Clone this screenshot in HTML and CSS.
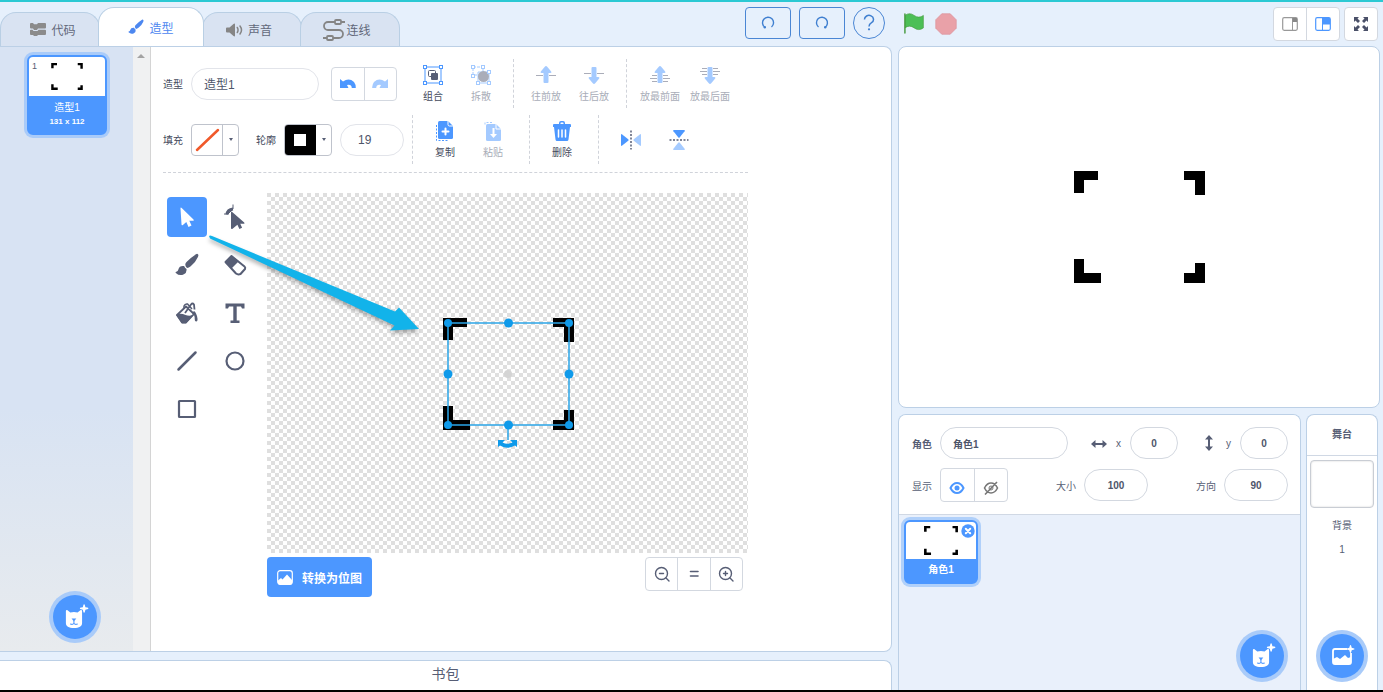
FILE: index.html
```html
<!DOCTYPE html>
<html lang="zh-CN">
<head>
<meta charset="utf-8">
<title>造型编辑器</title>
<link rel="stylesheet" href="styles.css">
</head>
<body>
<svg class="defs" aria-hidden="true">
  <defs>
    <symbol id="brackets" viewBox="0 0 131 112">
      <path d="M0 0h24v9H10v13H0zM110 0h21v24h-10V9h-11zM0 88h10v14h17v10H0zM121 92h10v20h-21v-10h11z"/>
    </symbol>
    <symbol id="cat" viewBox="0 0 28 28">
      <path fill="#fff" d="M5.500 8.300C5.500 7.400 6.400 7.200 7 7.700L9.600 9.800Q13 9 16.400 9.800L19 7.700C19.700 7.100 20.600 7.400 20.600 8.300V19.500C20.600 22.500 18 24.200 13 24.200S5.500 22.500 5.500 19.500Z"/>
      <path fill="#4c97ff" d="M10.800 15.500h4.400L13 18.200z"/>
      <path fill="none" stroke="#4c97ff" stroke-width="1" stroke-linecap="round" d="M13 17.500v2.300M9.800 20.600q2.200.8 3.200-.8 1 1.600 3.200.8"/>
      <path fill="#fff" d="M22.500 2q.5 0 .8 1.200l.4 1.600 1.600.4q1.200.3 1.200.8t-1.200.8l-1.600.4-.4 1.600q-.3 1.200-.8 1.200t-.8-1.200l-.4-1.600-1.600-.4q-1.200-.3-1.200-.8t1.200-.8l1.600-.4.4-1.600q.3-1.200.8-1.200z"/>
    </symbol>
    <symbol id="brush" viewBox="0 0 20 20">
      <path fill="currentColor" d="M18.800.8q1.200.6.300 2.600-1.600 4-6 7.600-1.600 1.400-3 1.400-1.300-1-1.500-2.500-.2-1.200 1-2.400Q14 3.200 17.500 1q.8-.5 1.300-.2zM7.600 10.900q.6 1.600 2 2.400.4 3-2.200 4.400Q3.800 19.600.7 16.600q-.7-.9.400-1 1.400-.2 1.700-1.900.8-3.300 4.800-2.800z"/>
    </symbol>
  </defs>
</svg>
<div class="app">
  <section class="editor">
    <header class="editor-head">
      <nav class="tabs">
        <button class="tab">
          <svg width="16" height="13" viewBox="0 0 16 13"><path fill="#8b8b8b" d="M0 1q0-1 1-1h2l1 1.300h3L8 0h7q1 0 1 1v3.500q0 1-1 1H8L7 7H4L3 5.500H1q-1 0-1-1zM0 7.500q0-.8 1-.8h1.500L3.500 8h4l1-1.300H15q1 0 1 1V11q0 1-1 1H8l-1 1H4l-1-1H1q-1 0-1-1z"/></svg>
          代码</button>
        <button class="tab tab-on">
          <svg width="16" height="16" viewBox="0 0 20 20"><use href="#brush"/></svg>
          造型</button>
        <button class="tab tab-sound">
          <svg width="17" height="14" viewBox="0 0 17 14"><path fill="#858585" d="M1 4.500h2.500L7.500 1q1.500-1 1.500.5v11q0 1.500-1.500.5l-4-3.500H1q-1 0-1-1v-3q0-1 1-1z"/><path fill="none" stroke="#858585" stroke-width="1.500" stroke-linecap="round" d="M11.300 4.500q1.500 2.500 0 5M14 3q3 4 0 8"/></svg>
          声音</button>
        <button class="tab tab-wire">
          <svg width="24" height="22" viewBox="0 0 24 22"><g fill="none" stroke="#858585" stroke-width="1.800"><path d="M13 3H6a4 4 0 0 0 0 8h11a4 4 0 0 1 0 8h-6M19 3h4M5 19H1"/><rect x="13" y="1" width="6" height="4" rx="1"/><rect x="5" y="17" width="6" height="4" rx="1"/></g></svg>
          连线</button>
      </nav>
      <div class="head-actions">
        <button class="outline-btn" aria-label="撤销"><svg width="14" height="14" viewBox="0 0 14 14"><path fill="none" stroke="#3f7fd0" stroke-width="1.400" d="M4 11.300a5.500 5.500 0 1 1 6.500-.3"/><circle cx="3.800" cy="11.200" r="1.200" fill="#3f7fd0"/></svg></button>
        <button class="outline-btn" aria-label="重做"><svg width="14" height="14" viewBox="0 0 14 14"><path fill="none" stroke="#3f7fd0" stroke-width="1.400" d="M3.500 11a5.500 5.500 0 1 1 6.500.3"/><circle cx="10.200" cy="11.200" r="1.200" fill="#3f7fd0"/></svg></button>
        <button class="outline-btn help" aria-label="帮助"><svg width="14" height="18" viewBox="0 0 14 18"><path fill="none" stroke="#3f7fd0" stroke-width="1.500" d="M2.500 5.500a4.500 4 0 1 1 7 3.200Q7 10.200 7 12.500"/><circle cx="7" cy="15.300" r="1.100" fill="#3f7fd0"/></svg></button>
      </div>
    </header>

    <main class="editor-body">
      <aside class="costumes">
        <button class="costume">
          <span class="costume-pic"><span class="costume-no">1</span><svg width="32" height="27"><use href="#brackets"/></svg></span>
          <span class="costume-name">造型1</span>
          <span class="costume-size">131 x 112</span>
        </button>
        <button class="fab" aria-label="选择一个造型"><svg width="30" height="30"><use href="#cat"/></svg></button>
      </aside>
      <div class="scrollbar"><span class="scroll-up"></span></div>

      <div class="paint">
        <div class="tool-rows">
          <div class="tool-row">
            <label class="field-label" for="cname">造型</label>
            <input class="pill name-input" id="cname" value="造型1">
            <div class="joined undo">
              <button aria-label="撤销"><svg width="16" height="14" viewBox="0 0 16 14"><path fill="#4c97ff" d="M0 2l3 2.500Q9 .5 14 5q2 2.500 1.800 6h-4Q11.500 7 7 8l1.500 3H0z"/></svg></button>
              <button class="dim" aria-label="重做"><svg width="16" height="14" viewBox="0 0 16 14"><path fill="#4c97ff" d="M16 2l-3 2.500Q7 .5 2 5 0 7.500.2 11h4Q4.500 7 9 8l-1.500 3H16z"/></svg></button>
            </div>
            <div class="group">
              <button class="act"><svg width="22" height="22" viewBox="0 0 22 22"><rect x="3" y="3" width="16" height="16" fill="none" stroke="#4c97ff"/><g fill="#fff" stroke="#4c97ff"><rect x="1.500" y="1.500" width="3" height="3"/><rect x="17.500" y="1.500" width="3" height="3"/><rect x="1.500" y="17.500" width="3" height="3"/><rect x="17.500" y="17.500" width="3" height="3"/></g><rect x="6.500" y="6.500" width="7" height="6" rx="1" fill="#fff" stroke="#575e75"/><rect x="9" y="9" width="7" height="7" rx="1" fill="#575e75"/></svg>组合</button>
              <button class="act dim"><svg width="22" height="22" viewBox="0 0 22 22"><path fill="none" stroke="#4c97ff" stroke-dasharray="3 1" d="M3 3h10v8H3z"/><path fill="none" stroke="#4c97ff" d="M8 8h11v11H8z"/><circle cx="13.500" cy="12.500" r="5.500" fill="#575e75"/><g fill="#fff" stroke="#4c97ff"><rect x="1.500" y="1.500" width="3" height="3"/><rect x="11.500" y="1.500" width="3" height="3"/><rect x="1.500" y="10.500" width="3" height="3"/><rect x="6.500" y="17.500" width="3" height="3"/><rect x="17.500" y="6.500" width="3" height="3"/><rect x="17.500" y="17.500" width="3" height="3"/></g></svg>拆散</button>
            </div>
            <div class="group">
              <button class="act dim"><svg width="22" height="22" viewBox="0 0 22 22"><path stroke="#575e75" d="M1 11.500h7M14 11.500h7"/><path fill="#4c97ff" d="M11 2q.7 0 1.200.7l4 4.800q.8 1.500-.8 1.500H13.500v9q0 1-1 1h-3q-1 0-1-1V9H6.600Q5 9 5.800 7.500l4-4.800Q10.300 2 11 2z"/></svg>往前放</button>
              <button class="act dim"><svg width="22" height="22" viewBox="0 0 22 22"><path stroke="#575e75" d="M1 9.500h7M14 9.500h7"/><path fill="#4c97ff" d="M11 20q.7 0 1.200-.7l4-4.800q.8-1.500-.8-1.500H13.500V4q0-1-1-1h-3q-1 0-1 1v9H6.600q-1.600 0-.8 1.500l4 4.800q.5.700 1.200.7z"/></svg>往后放</button>
            </div>
            <div class="group wide">
              <button class="act dim"><svg width="22" height="22" viewBox="0 0 22 22"><path stroke="#575e75" d="M3 11.500h5M14 11.500h5M1 14.500h7M14 14.500h7M3 17.500h5M14 17.500h5"/><path fill="#4c97ff" d="M11 2q.7 0 1.200.7l4 4.800q.8 1.500-.8 1.500H13.500v9q0 1-1 1h-3q-1 0-1-1V9H6.600Q5 9 5.800 7.500l4-4.800Q10.300 2 11 2z"/></svg>放最前面</button>
              <button class="act dim"><svg width="22" height="22" viewBox="0 0 22 22"><path stroke="#575e75" d="M3 4.500h5M14 4.500h5M1 7.500h7M14 7.500h7M3 10.500h5M14 10.500h5"/><path fill="#4c97ff" d="M11 20q.7 0 1.200-.7l4-4.800q.8-1.500-.8-1.500H13.500V4q0-1-1-1h-3q-1 0-1 1v9H6.600q-1.600 0-.8 1.500l4 4.800q.5.700 1.200.7z"/></svg>放最后面</button>
            </div>
          </div>

          <div class="tool-row">
            <span class="field-label">填充</span>
            <button class="swatch" aria-label="填充颜色"><span class="swatch-color"><svg width="30" height="30" viewBox="0 0 30 30"><path stroke="#f0592b" stroke-width="2.500" stroke-linecap="round" d="M5 25 26 5"/></svg></span><span class="caret"></span></button>
            <span class="field-label label-second">轮廓</span>
            <button class="swatch" aria-label="轮廓颜色"><span class="swatch-color swatch-black"><span class="swatch-hole"></span></span><span class="caret"></span></button>
            <input class="pill width-input" aria-label="轮廓宽度" value="19">
            <div class="group group-edit">
              <button class="act"><svg width="22" height="22" viewBox="0 0 22 22"><path fill="none" stroke="#4c97ff" stroke-dasharray="2 1.500" d="M2.500 5v15.500H14"/><path fill="#4c97ff" d="M4 2.500Q4 1 5.500 1H14l5 5v11.500q0 1.500-1.500 1.500h-12Q4 19 4 17.500z"/><path fill="none" stroke="#fff" d="M14 1v3.500Q14 6 15.500 6H19"/><path stroke="#fff" stroke-width="2" stroke-linecap="round" d="M11.500 8.500v6M8.500 11.500h6"/></svg>复制</button>
              <button class="act dim"><svg width="22" height="22" viewBox="0 0 22 22"><path fill="none" stroke="#4c97ff" stroke-dasharray="2 1.500" d="M3 4.500V2.500h8"/><path fill="#4c97ff" d="M4 5.500Q4 4 5.500 4H14l5 5v10.500q0 1.500-1.500 1.500h-12Q4 21 4 19.500z"/><path fill="none" stroke="#fff" d="M14 4v5h5"/><path fill="#fff" d="M10.500 8h2v6H15L11.500 18 8 14h2.500z"/></svg>粘贴</button>
            </div>
            <div class="group group-edit">
              <button class="act"><svg width="22" height="22" viewBox="0 0 22 22"><path fill="#4c97ff" d="M8 3q0-2 2-2h2q2 0 2 2v1h5q1 0 1 1v2H2V5q0-1 1-1h5zm1.500 1h3V3q0-.6-.6-.6h-1.800q-.6 0-.6.6zM3 7h16l-1.500 12.500Q17.300 21 16 21H6q-1.300 0-1.500-1.500z"/><path stroke="#fff" stroke-width="1.500" stroke-linecap="round" d="M7.500 10v7M11 10v7M14.500 10v7"/></svg>删除</button>
            </div>
            <div class="group group-flip">
              <button class="act" aria-label="水平翻转"><svg width="22" height="22" viewBox="0 0 22 22"><path stroke="#575e75" stroke-width="1.500" stroke-dasharray="2 1.500" d="M11 1.500v19"/><path fill="#4c97ff" d="M1 6q0-1.500 1.200-.6l6 4.800q1 .8 0 1.600l-6 4.800Q1 17.500 1 16z"/><path fill="#4c97ff" opacity=".5" d="M21 6q0-1.500-1.200-.6l-6 4.800q-1 .8 0 1.600l6 4.800q1.200.9 1.200-.6z"/></svg></button>
              <button class="act" aria-label="垂直翻转"><svg width="22" height="22" viewBox="0 0 22 22"><path stroke="#575e75" stroke-width="1.500" stroke-dasharray="2 1.500" d="M1.500 11h19"/><path fill="#4c97ff" d="M6 1q-1.500 0-.6 1.200l4.800 6q.8 1 1.600 0l4.800-6Q17.500 1 16 1z"/><path fill="#4c97ff" opacity=".5" d="M6 21q-1.500 0-.6-1.200l4.800-6q.8-1 1.600 0l4.800 6q.9 1.200-.6 1.200z"/></svg></button>
            </div>
          </div>
        </div>

        <div class="workspace">
          <div class="tools">
            <button class="tool tool-on" aria-label="选择"><svg width="24" height="24" viewBox="0 0 24 24"><path fill="#fff" d="M5.500 3.500q0-1.500 1.200-.5L18.500 14.500q1 1.200-.5 1.200h-3.700l2.200 4.800-3 1.400-2.200-4.900-3.400 3q-1.400 1-1.400-.7z"/></svg></button>
            <button class="tool" aria-label="变形"><svg width="24" height="24" viewBox="0 0 24 24"><path fill="#575e75" d="M8 7.500q0-1.500 1.200-.5l12 10.500q1 1.200-.5 1.200h-3.400l1.800 4-2.700 1.300-2-4.300-4.800 4.100q-1.600.8-1.600-.8z"/><path fill="none" stroke="#575e75" d="M1 9h4l5-5V-.5"/><path fill="none" stroke="#575e75" stroke-width="3" d="M4 9.500Q4.500 4.500 10 4"/></svg></button>
            <button class="tool" aria-label="画笔"><svg width="24" height="24" viewBox="0 0 20 20"><use href="#brush"/></svg></button>
            <button class="tool" aria-label="橡皮擦"><svg width="24" height="24" viewBox="0 0 24 24"><path fill="none" stroke="#575e75" stroke-width="2" stroke-linejoin="round" d="M8.500 3 2.500 9 13 20.500q2 1.500 4.500.5l4.500-5q.7-1.500-.5-2.500z"/><path fill="#575e75" d="M8.500 2.500 15.500 8.500 8.500 15.500 2 9.500z"/></svg></button>
            <button class="tool" aria-label="填充"><svg width="24" height="24" viewBox="0 0 24 24"><path fill="none" stroke="#575e75" stroke-width="1.800" stroke-linejoin="round" d="M2 14 11 5.500l8 7.500-8 8.500H7zM10 12 16 3.500q1.500-2 3 0l.5 5"/><path fill="none" stroke="#575e75" stroke-width="1.500" d="M9 8V5q1-2.500 3.500-2L17 8"/><path fill="#575e75" d="M1 14q4-2.500 9.500 0 5 2 9-1l-8.300 9.300H7zM19 10q2.500 1.500 3.500 7.500.3 3-1.300 3t-1.500-2.500q.3-4-2.500-6z"/></svg></button>
            <button class="tool" aria-label="文本"><svg width="24" height="24" viewBox="0 0 24 24"><path fill="#575e75" d="M2.500 2.500h19v5H19L18 5.500h-4.300v14h2.800V22h-9v-2.500h2.800v-14H6L5 7.500H2.500z"/></svg></button>
            <button class="tool" aria-label="线段"><svg width="24" height="24" viewBox="0 0 24 24"><path stroke="#575e75" stroke-width="2.500" stroke-linecap="round" d="M3.500 20.500 20.500 3.500"/></svg></button>
            <button class="tool" aria-label="圆"><svg width="24" height="24" viewBox="0 0 24 24"><circle cx="12" cy="12" r="8.500" fill="none" stroke="#575e75" stroke-width="2.200"/></svg></button>
            <button class="tool" aria-label="矩形"><svg width="24" height="24" viewBox="0 0 24 24"><rect x="4" y="4" width="16" height="16" rx=".5" fill="none" stroke="#575e75" stroke-width="2.200"/></svg></button>
          </div>
          <div class="canvas-col">
            <svg class="canvas" viewBox="0 0 481 360">
              <defs><pattern id="checker" width="8" height="8" patternUnits="userSpaceOnUse"><path fill="#dfdfdf" d="M0 0h4v4H0zM4 4h4v4H4z"/></pattern></defs>
              <rect width="481" height="360" fill="#fff"/>
              <rect width="481" height="360" fill="url(#checker)"/>
              <circle cx="241" cy="181" r="4" fill="#d4d4d4"/>
              <use href="#brackets" x="176" y="125" width="131" height="112"/>
              <path fill="none" stroke="#2ba5e8" stroke-width="1.500" d="M181 130h121v102H181zM241 232v15"/>
              <g fill="#0f9aea"><circle cx="181" cy="130" r="4"/><circle cx="241.500" cy="130" r="4.500"/><circle cx="302" cy="130" r="4"/><circle cx="181" cy="181" r="4.500"/><circle cx="302" cy="181" r="4.500"/><circle cx="181" cy="232" r="4"/><circle cx="241.500" cy="232" r="4.500"/><circle cx="302" cy="232" r="4"/>
              <path d="M231 247v7l2-1.500q7.500 4.500 15 0l2 1.500v-7h-7l2.500 2.500q-5 2.500-10 0L238 247z"/></g>
              <path class="pointer" fill="#12b3ea" d="M-58 43Q-57 42-55 43L128 118.500l4-4 20 21.500-29 1.500 4.500-5L-57 45.500z"/>
            </svg>
            <div class="canvas-foot">
              <button class="convert"><svg width="16" height="15" viewBox="0 0 16 15"><rect x=".7" y=".7" width="14.600" height="13.600" rx="2.500" fill="none" stroke="#fff" stroke-width="1.200"/><path fill="#fff" d="M1 10.500 4 8l1.500 1.500L10 4.500l5 5.500v3q0 1.500-1.500 1.500h-11Q1 14.500 1 13z"/></svg>转换为位图</button>
              <div class="joined zoom">
                <button aria-label="缩小"><svg width="16" height="16" viewBox="0 0 16 16"><g fill="none" stroke="#575e75" stroke-width="1.400" stroke-linecap="round"><circle cx="7.500" cy="7.500" r="6"/><path d="m12 12 3 3M5.500 7.500h4"/></g></svg></button>
                <button aria-label="重置缩放"><svg width="16" height="16" viewBox="0 0 16 16"><path stroke="#575e75" stroke-width="1.600" stroke-linecap="round" d="M4.500 5.500h7.500M4.500 10h7.500"/></svg></button>
                <button aria-label="放大"><svg width="16" height="16" viewBox="0 0 16 16"><g fill="none" stroke="#575e75" stroke-width="1.400" stroke-linecap="round"><circle cx="7.500" cy="7.500" r="6"/><path d="m12 12 3 3M5.500 7.500h4M7.500 5.500v4"/></g></svg></button>
              </div>
            </div>
          </div>
        </div>
      </div>
    </main>
    <button class="backpack">书包</button>
  </section>

  <section class="player">
    <header class="stage-head">
      <button class="plain" aria-label="运行"><svg width="22" height="21" viewBox="0 0 16.630 17.500"><path fill="#4cbf56" stroke="#45993d" stroke-width=".5" stroke-linejoin="round" d="M.75 2a6.440 6.440 0 0 1 7.690 0 6.440 6.440 0 0 0 7.690 0v10.400a6.440 6.440 0 0 1-7.690 0 6.440 6.440 0 0 0-7.690 0"/><path stroke="#45993d" stroke-width="1.200" stroke-linecap="round" d="M.75 16.750v-16"/></svg></button>
      <button class="plain" aria-label="停止"><svg width="22" height="22" viewBox="0 0 14 14"><path fill="#e9a1a8" stroke="#dd979f" stroke-width=".5" stroke-linejoin="round" d="M4.300.5h5.400l3.800 3.800v5.400l-3.800 3.800H4.300L.5 9.700V4.300z"/></svg></button>
      <div class="joined sizes">
        <button aria-label="小舞台"><svg width="16" height="14" viewBox="0 0 16 14"><rect x=".7" y=".7" width="14.600" height="12.600" rx="1.500" fill="#fff" stroke="#999" stroke-width="1.200"/><path stroke="#999" d="M10.500 1v12"/><path fill="#888" d="M10.500 1H15v4h-4.500z"/></svg></button>
        <button aria-label="大舞台"><svg width="16" height="14" viewBox="0 0 16 14"><rect x=".7" y=".7" width="14.600" height="12.600" rx="1.500" fill="#fff" stroke="#4c97ff" stroke-width="1.200"/><path stroke="#4c97ff" d="M7.500 1v12M8 7h7"/><path fill="#4c97ff" d="M7.500 1H15v6H7.500z"/></svg></button>
      </div>
      <div class="joined full">
        <button aria-label="全屏"><svg width="16" height="16" viewBox="0 0 16 16"><path fill="#4a5068" d="M1 1h5L4.500 2.500l2.500 2.500L5 7 2.500 4.500 1 6zM15 1v5l-1.500-1.500L11 7 9 5l2.500-2.500L10 1zM1 15v-5l1.500 1.500L5 9l2 2-2.500 2.500L6 15zM15 15h-5l1.500-1.500L9 11l2-2 2.500 2.500L15 10z"/></svg></button>
      </div>
    </header>
    <svg class="stage" viewBox="0 0 480 360"><use href="#brackets" x="175" y="124" width="131" height="112"/></svg>

    <div class="lower">
      <section class="sprites">
        <div class="info">
          <div class="info-row">
            <div class="cell"><label class="strong" for="sname">角色</label><input class="pill small sprite-name" id="sname" value="角色1"></div>
            <div class="cell"><svg width="16" height="16" viewBox="0 0 16 16"><path fill="#575e75" d="M0 9l4.500-4v3h7V5L16 9l-4.500 4v-3h-7v3z"/></svg><label class="axis" for="px">x</label><input class="pill small coord" id="px" value="0"></div>
            <div class="cell"><svg width="16" height="16" viewBox="0 0 16 16"><path fill="#575e75" d="M8 0l4 4.500H9v7h3L8 16l-4-4.500h3v-7H4z"/></svg><label class="axis" for="py">y</label><input class="pill small coord" id="py" value="0"></div>
          </div>
          <div class="info-row">
            <div class="cell"><span>显示</span>
              <div class="joined eyes">
                <button aria-label="显示"><svg width="16" height="14" viewBox="0 0 16 14"><path fill="none" stroke="#4c97ff" stroke-width="2" d="M1.500 7Q4 2 8 2t6.500 5Q12 12 8 12T1.500 7z"/><circle cx="8" cy="7" r="2.500" fill="#4c97ff"/></svg></button>
                <button aria-label="隐藏"><svg width="16" height="14" viewBox="0 0 16 14"><path fill="none" stroke="#777" stroke-width="1.600" d="M1.500 7Q4 2 8 2t6.500 5Q12 12 8 12T1.500 7zM2 13.500 14 1"/><circle cx="8" cy="7" r="2" fill="none" stroke="#777"/></svg></button>
              </div>
            </div>
            <div class="cell"><label for="size">大小</label><input class="pill small measure" id="size" value="100"></div>
            <div class="cell"><label for="dir">方向</label><input class="pill small measure" id="dir" value="90"></div>
          </div>
        </div>
        <div class="sprite-list">
          <div class="sprite">
            <span class="sprite-pic"><svg width="34" height="29"><use href="#brackets"/></svg></span>
            <span class="sprite-label">角色1</span>
            <button class="remove" aria-label="删除角色"><svg width="14" height="14" viewBox="0 0 14 14"><circle cx="7" cy="7" r="6.700" fill="#4c97ff"/><path stroke="#fff" stroke-width="2" stroke-linecap="round" d="m4.800 4.800 4.400 4.400M9.200 4.800 4.800 9.200"/></svg></button>
          </div>
          <button class="fab" aria-label="选择一个角色"><svg width="30" height="30"><use href="#cat"/></svg></button>
        </div>
      </section>
      <section class="backdrops">
        <h2 class="backdrops-title">舞台</h2>
        <span class="backdrop-thumb"></span>
        <span class="backdrop-label">背景</span>
        <span class="backdrop-count">1</span>
        <button class="fab" aria-label="选择一个背景"><svg width="28" height="28" viewBox="0 0 28 28"><path fill="none" stroke="#fff" stroke-width="1.800" d="M19 7H7Q5 7 5 9v11q0 2 2 2h14q2 0 2-2v-9"/><path fill="#fff" d="M5 17l4-2 3 2 5-4 3 3 3-1v5q0 2-2 2H7q-2 0-2-2z"/><path fill="#fff" d="M22.500 3q.5 0 .8 1.200l.4 1.600 1.600.4q1.200.3 1.200.8t-1.200.8l-1.600.4-.4 1.600q-.3 1.200-.8 1.200t-.8-1.200l-.4-1.600-1.600-.4q-1.200-.3-1.200-.8t1.200-.8l1.600-.4.4-1.600q.3-1.200.8-1.200z"/></svg></button>
      </section>
    </div>
  </section>
</div>
</body>
</html>
```

FILE: styles.css
```css
* { box-sizing: border-box; }

body {
  margin: 0;
  font-family: "Liberation Sans", "Noto Sans CJK SC", sans-serif;
  font-size: 10px;
  color: #575e75;
  background: #e6f0fc;
}

button {
  margin: 0;
  padding: 0;
  border: 0;
  background: none;
  font: inherit;
  color: inherit;
}

svg { display: block; flex: none; }
.defs { position: absolute; width: 0; height: 0; }

.app {
  display: grid;
  grid-template-columns: minmax(0, 1fr) 482px;
  gap: 6px;
  height: 100vh;
  padding-right: 3px;
  border-top: 2px solid #2bc9d3;
  border-bottom: 2px solid #000;
}

.editor, .player { display: flex; flex-direction: column; min-height: 0; }

/* Tabs and header */
.editor-head {
  display: flex;
  justify-content: space-between;
  flex: 0 0 44px;
  padding-right: 7px;
}

.tabs { display: flex; align-items: flex-end; }

.tab {
  display: flex;
  align-items: center;
  justify-content: center;
  gap: 5px;
  width: 100px;
  height: 34px;
  border: 1px solid #b9cfe4;
  border-bottom: 0;
  border-radius: 16px 16px 0 0;
  background: #d9e3f2;
  font-size: 12px;
  color: #62687a;
}

.tab:first-child { padding-left: 6px; }
.tab-sound { padding-right: 6px; }
.tab-wire { gap: 0; margin-left: -2px; padding-right: 7px; }

.tab-on {
  z-index: 1;
  width: 106px;
  height: 39px;
  margin: 0 -2px;
  background: #fff;
  color: #4c87f0;
}

.head-actions { display: flex; gap: 8px; padding-top: 5px; }

.outline-btn {
  display: flex;
  align-items: center;
  justify-content: center;
  width: 46px;
  height: 32px;
  border: 1px solid #4a86d4;
  border-radius: 4px;
}

.help { width: 32px; border-radius: 50%; }

.editor-body {
  display: flex;
  flex: 1;
  min-height: 0;
  border: 1px solid #bcd0e6;
  border-left: 0;
  border-radius: 0 8px 8px 0;
  background: #fff;
}

/* Costume list */
.costumes {
  display: flex;
  flex-direction: column;
  justify-content: space-between;
  width: 133px;
  padding: 8px 0 12px 27px;
  background: linear-gradient(#d8e3f3 60%, #e8ebee);
}

.costume {
  display: flex;
  flex-direction: column;
  align-items: center;
  width: 80px;
  height: 80px;
  border: 2px solid #4c97ff;
  border-radius: 6px;
  background: #4c97ff;
  box-shadow: 0 0 0 3px #a9cbf9;
  color: #fff;
}

.costume-pic {
  position: relative;
  display: flex;
  justify-content: center;
  align-items: center;
  align-self: stretch;
  height: 39px;
  border-radius: 4px 4px 0 0;
  background: #fff;
  color: #000;
}

.costume-no { position: absolute; top: 4px; left: 3px; font-size: 9px; color: #575e75; }
.costume-name { margin-top: 4px; line-height: 15px; }
.costume-size { font-size: 8px; font-weight: bold; line-height: 14px; }

.fab {
  display: flex;
  align-items: center;
  justify-content: center;
  width: 44px;
  height: 44px;
  border-radius: 50%;
  background: #4c97ff;
  box-shadow: 0 0 0 4px #a9cbf9;
}

.costumes .fab { margin-left: 26px; }

.scrollbar {
  width: 18px;
  padding: 7px 4px;
  border-right: 1px solid #d4d4d4;
  background: #f0f1f2;
}

.scroll-up {
  display: block;
  width: 0;
  border: 4px solid transparent;
  border-top: 0;
  border-bottom-color: #a3a3a3;
}

/* Paint editor */
.paint { flex: 1; min-width: 0; padding: 12px; }
.tool-rows, .workspace { max-width: 585px; }

.tool-rows {
  display: grid;
  gap: 7px;
  padding-bottom: 8px;
  border-bottom: 1px dashed #d0d3da;
}

.tool-row { display: flex; align-items: center; height: 49px; }
.field-label { width: 28px; color: #444a5c; }
.label-second { margin-left: 17px; }

.pill {
  height: 32px;
  min-width: 0;
  border: 1px solid #e2e4ea;
  border-radius: 16px;
  background: #fff;
  font: 12px "Liberation Sans", "Noto Sans CJK SC", sans-serif;
  color: #4e556a;
}

.name-input { width: 128px; padding: 0 12px; }
.width-input { width: 64px; margin-left: 8px; padding: 0 17px; }

.joined {
  display: flex;
  height: 34px;
  border: 1px solid #d3d8e0;
  border-radius: 4px;
  background: #fff;
}

.joined button {
  display: flex;
  flex: 1;
  align-items: center;
  justify-content: center;
}

.joined button + button { border-left: 1px solid #d3d8e0; }
.undo { width: 66px; margin: 0 12px; }
.dim > * { opacity: .5; }

.group {
  display: flex;
  align-items: center;
  height: 100%;
  padding-right: 8px;
}

.group + .group, .group-edit {
  padding-left: 8px;
  border-left: 1px dashed #d0d3da;
}

.group-edit { margin-left: 8px; padding-right: 12px; }
.group-edit + .group-edit { margin-left: 0; }

.act {
  display: flex;
  flex-direction: column;
  align-items: center;
  gap: 3px;
  width: 48px;
  line-height: 15px;
  white-space: nowrap;
  color: #444a5c;
}

.act.dim { color: #a9adb8; }
.wide .act { width: 50px; }

.swatch {
  display: flex;
  width: 48px;
  height: 32px;
  overflow: hidden;
  border: 1px solid #bfc3cc;
  border-radius: 4px;
}

.swatch-color {
  display: flex;
  align-items: center;
  justify-content: center;
  width: 31px;
  height: 30px;
  border-right: 1px solid #bfc3cc;
}

.swatch-black { border-color: #000; background: #000; }
.swatch-hole { width: 12px; height: 12px; background: #fff; }

.caret {
  margin: auto;
  border: 2px solid transparent;
  border-top: 3px solid #575e75;
  border-bottom: 0;
}

.workspace { display: flex; gap: 12px; padding: 20px 0 0 4px; }

.tools {
  display: grid;
  grid-template-columns: 40px 40px;
  gap: 8px;
  align-content: start;
  padding-top: 4px;
}

.tool {
  display: flex;
  align-items: center;
  justify-content: center;
  height: 40px;
  border-radius: 4px;
}

.tool svg { overflow: visible; }
.tool-on { background: #4c97ff; }
.canvas-col { flex: 1; min-width: 0; }
.canvas { width: 100%; overflow: visible; }
.pointer { filter: drop-shadow(0 3px 2px rgba(0, 0, 0, .3)); }

.canvas-foot {
  display: flex;
  justify-content: space-between;
  align-items: flex-start;
  padding: 4px 5px 0 0;
}

.convert {
  display: flex;
  align-items: center;
  gap: 9px;
  height: 40px;
  padding: 0 10px;
  border-radius: 4px;
  background: #4c97ff;
  font-size: 12px;
  font-weight: bold;
  color: #fff;
}

.zoom { width: 98px; }

.backpack {
  flex: 0 0 30px;
  margin-top: 8px;
  padding-bottom: 3px;
  border: 1px solid #bcd0e6;
  border-width: 1px 1px 0 0;
  border-radius: 0 8px 0 0;
  background: #fff;
  font-size: 14px;
  line-height: 20px;
}

/* Stage */
.stage-head {
  display: flex;
  flex: 0 0 44px;
  align-items: flex-start;
  gap: 10px;
  padding: 5px 2px 0 5px;
}

.plain { padding-top: 6px; }
.sizes { width: 67px; margin-left: auto; }
.full { width: 34px; margin-left: -6px; }

.stage {
  width: 100%;
  border: 1px solid #bcd0e6;
  border-radius: 8px;
  background: #fff;
}

.lower {
  display: grid;
  grid-template-columns: minmax(0, 1fr) 72px;
  gap: 5px;
  flex: 1;
  min-height: 0;
  margin-top: 6px;
  padding-right: 2px;
}

.sprites, .backdrops {
  display: flex;
  flex-direction: column;
  overflow: hidden;
  border: 1px solid #bcd0e6;
  border-bottom: 0;
  border-radius: 8px 8px 0 0;
}

.info {
  display: grid;
  gap: 10px;
  padding: 12px 12px 13px 13px;
  border-bottom: 1px solid #d0d8e4;
  background: #fff;
}

.info-row { display: flex; justify-content: space-between; height: 32px; }
.cell { display: flex; align-items: center; gap: 8px; }
.strong { font-weight: bold; }
.axis { width: 7px; text-align: center; }
.coord { width: 48px; }
.measure { width: 64px; }

.small {
  border-color: #d3d8e0;
  font-size: 10px;
  font-weight: bold;
  text-align: center;
}

.sprite-name { width: 128px; padding: 0 12px; text-align: left; }
.eyes { width: 68px; }
.eyes button { padding-top: 5px; }

.sprite-list {
  display: flex;
  flex: 1;
  justify-content: space-between;
  padding: 5px 16px 12px 5px;
  background: #e9f0fb;
}

.sprite {
  position: relative;
  display: flex;
  flex-direction: column;
  width: 74px;
  height: 64px;
  border: 2px solid #4c97ff;
  border-radius: 6px;
  background: #4c97ff;
  box-shadow: 0 0 0 3px #b0d0fa;
  color: #fff;
}

.sprite-pic {
  display: flex;
  align-items: center;
  justify-content: center;
  height: 37px;
  border-radius: 4px 4px 0 0;
  background: #fff;
  color: #000;
}

.sprite-label { text-align: center; font-weight: bold; line-height: 22px; }
.remove { position: absolute; top: 2px; right: 1px; }
.sprite-list .fab { align-self: flex-end; }

.backdrops { align-items: center; padding-bottom: 12px; background: #fff; }

.backdrops-title {
  align-self: stretch;
  margin: 0;
  border-bottom: 1px solid #d0d8e4;
  font-size: 10px;
  line-height: 40px;
  text-align: center;
}

.backdrop-thumb {
  width: 64px;
  height: 48px;
  margin: 4px 0 10px;
  border: 1px solid #c9cdd4;
  border-radius: 4px;
  box-shadow: inset 0 0 2px #ccc;
}

.backdrop-label { line-height: 16px; }
.backdrop-count { margin-top: 8px; line-height: 16px; }
.backdrops .fab { margin-top: auto; }
```
